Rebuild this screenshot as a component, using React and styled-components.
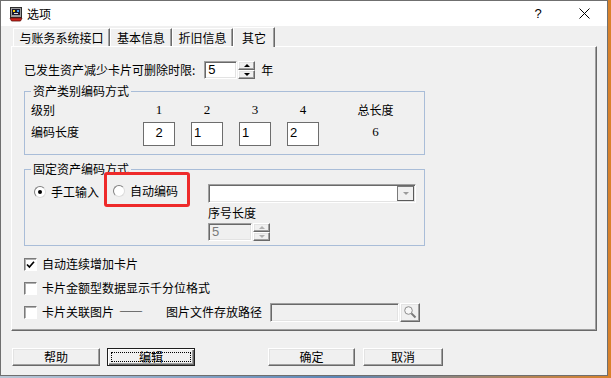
import React from "react";
import styled, { createGlobalStyle, css } from "styled-components";

const GlobalStyle = createGlobalStyle`
  html, body { margin: 0; padding: 0; }
  body {
    background: linear-gradient(90deg, #b9c7d6 0%, #5c86b5 55%, #d9822b 100%);
    font-family: "Noto Sans CJK SC", "Liberation Sans", sans-serif;
    font-size: 12px;
    color: #000;
  }
`;

const sunken = css`
  box-sizing: border-box;
  border: 1px solid;
  border-color: #a0a0a0 #fff #fff #a0a0a0;
  box-shadow: inset 1px 1px 0 #696969, inset -1px -1px 0 #e3e3e3;
`;

const raised = css`
  box-sizing: border-box;
  border: 1px solid;
  border-color: #fff #696969 #696969 #fff;
  box-shadow: inset -1px -1px 0 #a0a0a0, inset 1px 1px 0 #e3e3e3;
  background: #f0f0f0;
`;

const Window = styled.div`
  width: 608px;
  height: 376px;
  box-sizing: border-box;
  border: 1px solid #6f6f6f;
  background: #f0f0f0;
  display: flex;
  flex-direction: column;
  overflow: hidden;
`;

const TitleBar = styled.div`
  height: 25px;
  flex-shrink: 0;
  background: #fff;
  display: flex;
  align-items: center;
  padding-left: 7px;
`;

const TitleText = styled.span`
  margin-left: 3px;
  font-size: 12px;
  line-height: 25px;
  flex: 1;
`;

const TitleButton = styled.div`
  width: 46px;
  height: 25px;
  display: flex;
  align-items: center;
  justify-content: center;
  font-family: "Liberation Sans", sans-serif;
  font-size: 13px;
`;

const Body = styled.div`
  padding: 1px 10px 0 10px;
  display: flex;
  flex-direction: column;
`;

const TabRow = styled.div`
  height: 19px;
  display: flex;
  align-items: flex-end;
  padding-left: 2px;
`;

const Tab = styled.div`
  width: ${p => p.$w}px;
  height: ${p => (p.$active ? 20 : 18)}px;
  margin-bottom: ${p => (p.$active ? -1 : 0)}px;
  position: relative;
  z-index: ${p => (p.$active ? 1 : 0)};
  box-sizing: border-box;
  border-top: 1px solid #fff;
  border-left: 1px solid #fff;
  border-right: 1px solid #696969;
  box-shadow: inset -1px 0 0 #a0a0a0;
  background: #f0f0f0;
  display: flex;
  align-items: center;
  justify-content: center;
  line-height: 16px;
`;

const Panel = styled.div`
  height: 285px;
  box-sizing: border-box;
  border: 1px solid;
  border-color: #fff #696969 #696969 #fff;
  box-shadow: inset -1px -1px 0 #a0a0a0;
  padding: 14px 0 0 12px;
  display: flex;
  flex-direction: column;
  align-items: flex-start;
`;

const LimitRow = styled.div`
  height: 18px;
  display: flex;
  align-items: center;
  line-height: 14px;
`;

const Spin = styled.div`
  display: flex;
  margin-left: ${p => p.$left || 0}px;
  margin-top: ${p => p.$top || 0}px;
`;

const SpinField = styled.div`
  ${sunken};
  width: ${p => p.$w}px;
  height: 18px;
  background: ${p => (p.$disabled ? "#f0f0f0" : "#fff")};
  color: ${p => (p.$disabled ? "#7a7a7a" : "#000")};
  font-family: "Liberation Sans", sans-serif;
  font-size: 13px;
  line-height: 16px;
  padding-left: 3px;
`;

const SpinButtons = styled.div`
  width: 17px;
  height: 18px;
  margin-left: 1px;
  display: flex;
  flex-direction: column;
`;

const SpinHalf = styled.div`
  ${raised};
  flex: 1;
  display: flex;
  align-items: center;
  justify-content: center;
`;

const Arrow = styled.span`
  width: 0;
  height: 0;
  border-left: 3px solid transparent;
  border-right: 3px solid transparent;
  ${p =>
    p.$up
      ? `border-bottom: 3px solid ${p.$color};`
      : `border-top: 3px solid ${p.$color};`}
`;

const Unit = styled.span`
  margin-left: 6px;
`;

const Group = styled.fieldset`
  margin: ${p => p.$top}px 0 0 0;
  width: 401px;
  box-sizing: border-box;
  border: 1px solid #a9bdd8;
  padding: 0 0 ${p => p.$bottom}px 6px;
  min-width: 0;
`;

const Legend = styled.legend`
  padding: 0 2px;
  line-height: 14px;
  font-size: 12px;
`;

const LevelGrid = styled.div`
  display: grid;
  grid-template-columns: 104px repeat(4, 48px) 97px;
  grid-template-rows: 16px 24px;
  row-gap: 4px;
  margin-top: 4px;
  align-items: center;
  line-height: 14px;
`;

const HeadNum = styled.span`
  justify-self: center;
  font-family: "Liberation Serif", serif;
  font-size: 13px;
`;

const Centered = styled.span`
  justify-self: center;
`;

const RowLabel = styled.span`
  align-self: start;
  padding-top: 3px;
`;

const LenBox = styled.div`
  justify-self: center;
  width: 32px;
  height: 24px;
  box-sizing: border-box;
  border: 1px solid #6d6d6d;
  background: #fff;
  font-family: "Liberation Sans", sans-serif;
  font-size: 13px;
  line-height: 16px;
  padding: 2px 2px 0;
  text-align: ${p => (p.$center ? "center" : "left")};
`;

const TotalNum = styled.span`
  justify-self: center;
  align-self: start;
  padding-top: 3px;
  font-family: "Liberation Serif", serif;
  font-size: 13px;
`;

const CodeRow = styled.div`
  display: flex;
  align-items: flex-start;
  padding-left: 3px;
`;

const RadioOption = styled.label`
  display: flex;
  align-items: center;
  height: 14px;
  margin-top: ${p => p.$top || 0}px;
  line-height: 14px;
`;

const RadioCircle = styled.span`
  width: 12px;
  height: 12px;
  box-sizing: border-box;
  border-radius: 50%;
  border: 1px solid;
  border-color: #7f7f7f #dcdcdc #dcdcdc #7f7f7f;
  background: #fff;
  margin-right: 5px;
  display: flex;
  align-items: center;
  justify-content: center;
  &::after {
    content: "";
    width: 4px;
    height: 4px;
    border-radius: 50%;
    background: ${p => (p.$checked ? "#000" : "transparent")};
  }
`;

const Highlight = styled.div`
  width: 86px;
  height: 35px;
  box-sizing: border-box;
  margin: -4px 0 0 5px;
  border: 3px solid #ee2a2a;
  border-radius: 3px;
  display: flex;
  align-items: center;
  padding: 3px 0 0 6px;
`;

const SerialColumn = styled.div`
  margin-left: 18px;
  display: flex;
  flex-direction: column;
  align-items: flex-start;
`;

const Combo = styled.div`
  ${sunken};
  width: 208px;
  height: 19px;
  margin-top: 8px;
  background: #fff;
  display: flex;
  justify-content: flex-end;
  padding: 1px;
`;

const ComboButton = styled.div`
  width: 17px;
  border: 1px solid;
  border-color: #7a7a7a #5a5a5a #5a5a5a #7a7a7a;
  background: #f0f0f0;
  box-sizing: border-box;
  display: flex;
  align-items: center;
  justify-content: center;
`;

const SerialLabel = styled.span`
  margin-top: 3px;
  line-height: 14px;
`;

const CheckRow = styled.div`
  height: 20px;
  margin-top: ${p => p.$top}px;
  display: flex;
  align-items: center;
  line-height: 14px;
`;

const CheckBox = styled.span`
  width: 13px;
  height: 13px;
  box-sizing: border-box;
  border: 1px solid;
  border-color: #7a7a7a #fff #fff #7a7a7a;
  box-shadow: inset 1px 1px 0 #b0b0b0;
  background: #fff;
  margin-right: 5px;
  display: flex;
  align-items: center;
  justify-content: center;
`;

const Dash = styled.span`
  margin-left: 5px;
  font-feature-settings: "fwid" 1;
  white-space: nowrap;
`;

const PathLabel = styled.span`
  margin-left: 23px;
`;

const PathField = styled.div`
  ${sunken};
  width: 129px;
  height: 19px;
  margin-left: 8px;
  background: #f0f0f0;
`;

const BrowseButton = styled.div`
  ${raised};
  width: 20px;
  height: 19px;
  margin-left: 1px;
  display: flex;
  align-items: center;
  justify-content: center;
`;

const ButtonRow = styled.div`
  display: flex;
  padding-left: 1px;
  margin-top: 17px;
`;

const Button = styled.div`
  ${raised};
  width: ${p => p.$w}px;
  height: 18px;
  margin-left: ${p => p.$left || 0}px;
  display: flex;
  align-items: center;
  justify-content: center;
  line-height: 14px;
  ${p =>
    p.$default &&
    css`
      border: 1px solid #1f1f1f;
      box-shadow: inset 1px 1px 0 #fff, inset -1px -1px 0 #696969,
        inset -2px -2px 0 #a0a0a0;
      padding: 3px;
      align-items: stretch;
    `}
`;

const FocusRing = styled.span`
  flex: 1;
  border: 1px dotted #000;
  display: flex;
  align-items: center;
  justify-content: center;
  line-height: 10px;
`;

const AppIcon = () => (
  <svg width="16" height="16" viewBox="0 0 16 16">
    <rect x="2.5" y="1.5" width="11" height="10" fill="#9c9c9c" stroke="#2c2c2c" />
    <rect x="4" y="3" width="8" height="6" fill="#1b1b2e" />
    <rect x="5" y="4" width="2" height="2" fill="#ffd200" />
    <rect x="9" y="4" width="2" height="2" fill="#4aa8ff" />
    <rect x="6" y="7" width="4" height="1" fill="#e0e0e0" />
    <path d="M2 12 H14 L12.5 15 H3.5 Z" fill="#d0241c" stroke="#5a0d08" strokeWidth="0.8" />
  </svg>
);

const CloseIcon = () => (
  <svg width="11" height="11" viewBox="0 0 11 11">
    <path d="M0.5 0.5 L10.5 10.5 M10.5 0.5 L0.5 10.5" stroke="#000" strokeWidth="1" />
  </svg>
);

const CheckMark = () => (
  <svg width="9" height="9" viewBox="0 0 9 9">
    <path d="M1 4.5 L3.4 7 L8 1.8" stroke="#000" strokeWidth="1.7" fill="none" />
  </svg>
);

const Magnifier = () => (
  <svg width="14" height="14" viewBox="0 0 14 14">
    <circle cx="5.5" cy="5.5" r="3.8" fill="#f7f7f7" stroke="#8c8c8c" />
    <path d="M8.4 8.4 L12.5 12.5" stroke="#7a7a7a" strokeWidth="2" />
  </svg>
);

const SpinBox = ({ value, width, disabled, left, top }) => {
  const color = disabled ? "#b0b0b0" : "#000";
  return (
    <Spin $left={left} $top={top}>
      <SpinField $w={width} $disabled={disabled}>{value}</SpinField>
      <SpinButtons>
        <SpinHalf><Arrow $up $color={color} /></SpinHalf>
        <SpinHalf><Arrow $color={color} /></SpinHalf>
      </SpinButtons>
    </Spin>
  );
};

const tabs = [
  { label: "与账务系统接口", w: 97 },
  { label: "基本信息", w: 62 },
  { label: "折旧信息", w: 61 },
  { label: "其它", w: 42, active: true },
];

const lengths = [
  { v: "2", center: true },
  { v: "1" },
  { v: "1" },
  { v: "2" },
];

export default function App() {
  return (
    <>
      <GlobalStyle />
      <Window>
        <TitleBar>
          <AppIcon />
          <TitleText>选项</TitleText>
          <TitleButton>?</TitleButton>
          <TitleButton><CloseIcon /></TitleButton>
        </TitleBar>
        <Body>
          <TabRow>
            {tabs.map(t => (
              <Tab key={t.label} $w={t.w} $active={t.active}>{t.label}</Tab>
            ))}
          </TabRow>
          <Panel>
            <LimitRow>
              <span>已发生资产减少卡片可删除时限:</span>
              <SpinBox value="5" width={33} left={9} />
              <Unit>年</Unit>
            </LimitRow>

            <Group $top={5} $bottom={8}>
              <Legend>资产类别编码方式</Legend>
              <LevelGrid>
                <span>级别</span>
                <HeadNum>1</HeadNum>
                <HeadNum>2</HeadNum>
                <HeadNum>3</HeadNum>
                <HeadNum>4</HeadNum>
                <Centered>总长度</Centered>
                <RowLabel>编码长度</RowLabel>
                {lengths.map((l, i) => (
                  <LenBox key={i} $center={l.center}>{l.v}</LenBox>
                ))}
                <TotalNum>6</TotalNum>
              </LevelGrid>
            </Group>

            <Group $top={7} $bottom={4}>
              <Legend>固定资产编码方式</Legend>
              <CodeRow>
                <RadioOption $top={9}>
                  <RadioCircle $checked />
                  手工输入
                </RadioOption>
                <Highlight>
                  <RadioOption>
                    <RadioCircle />
                    自动编码
                  </RadioOption>
                </Highlight>
                <SerialColumn>
                  <Combo>
                    <ComboButton><Arrow $color="#9a9a9a" /></ComboButton>
                  </Combo>
                  <SerialLabel>序号长度</SerialLabel>
                  <SpinBox value="5" width={44} disabled top={3} />
                </SerialColumn>
              </CodeRow>
            </Group>

            <CheckRow $top={8}>
              <CheckBox><CheckMark /></CheckBox>
              自动连续增加卡片
            </CheckRow>
            <CheckRow $top={4}>
              <CheckBox />
              卡片金额型数据显示千分位格式
            </CheckRow>
            <CheckRow $top={4}>
              <CheckBox />
              卡片关联图片
              <Dash>——</Dash>
              <PathLabel>图片文件存放路径</PathLabel>
              <PathField />
              <BrowseButton><Magnifier /></BrowseButton>
            </CheckRow>
          </Panel>

          <ButtonRow>
            <Button $w={88}>帮助</Button>
            <Button $w={88} $left={7} $default><FocusRing>编辑</FocusRing></Button>
            <Button $w={87} $left={73}>确定</Button>
            <Button $w={80} $left={8}>取消</Button>
          </ButtonRow>
        </Body>
      </Window>
    </>
  );
}
